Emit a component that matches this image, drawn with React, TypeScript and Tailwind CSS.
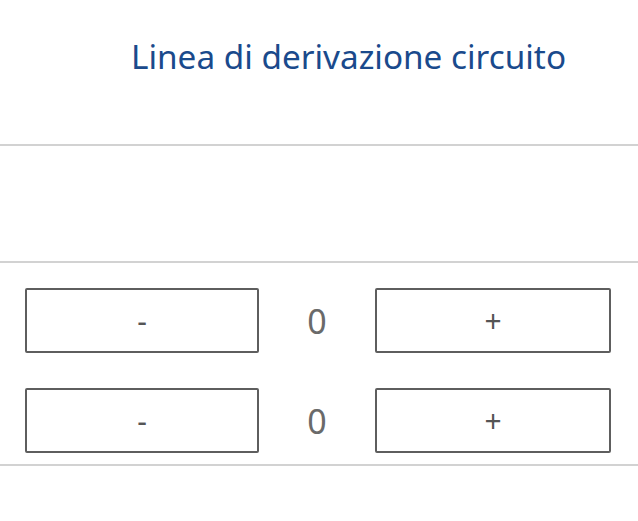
import React from "react";

function Stepper() {
  return (
    <div className="flex items-center h-[65px]">
      <button className="ml-[25px] w-[234px] h-[65px] border-2 border-[#5e5e5e] rounded-[2px] bg-white text-[30px] text-[#555] flex items-center justify-center leading-none">
        -
      </button>
      <div className="w-[116px] text-center text-[34px] text-[#6a6a6a] leading-none">0</div>
      <button className="w-[236px] h-[65px] border-2 border-[#5e5e5e] rounded-[2px] bg-white text-[30px] text-[#555] flex items-center justify-center leading-none">
        +
      </button>
    </div>
  );
}

export default function App() {
  return (
    <div className="w-[638px] h-[521px] bg-white overflow-hidden" style={{ fontFamily: '"Noto Sans", "Open Sans", sans-serif' }}>
      <div className="h-[144px] pl-[131px] pt-[36px]">
        <div className="text-[33.3px] leading-[40px] text-[#1a4a8c] whitespace-nowrap">Linea di derivazione circuito</div>
      </div>
      <div className="h-[2px] bg-[#d2d2d2]" />
      <div className="h-[115px]" />
      <div className="h-[2px] bg-[#d2d2d2]" />
      <div className="pt-[25px] flex flex-col gap-[35px]">
        <Stepper />
        <Stepper />
      </div>
      <div className="mt-[11px] h-[2px] bg-[#d2d2d2]" />
    </div>
  );
}
